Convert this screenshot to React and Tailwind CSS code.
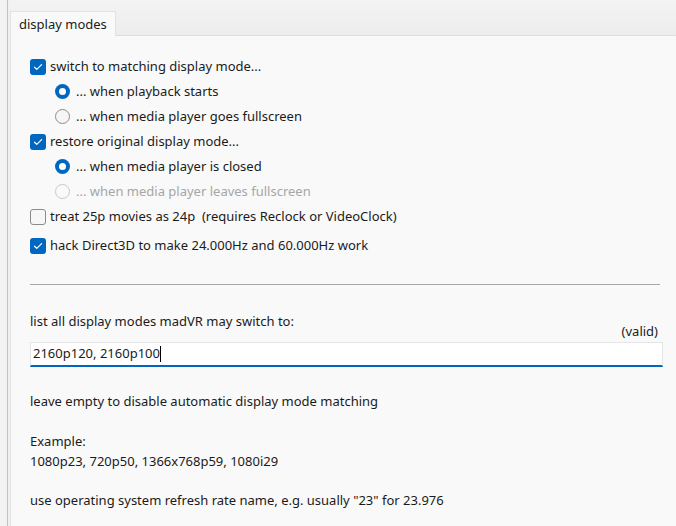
import React from 'react'

const font = { fontFamily: '"Noto Sans", "Open Sans", sans-serif' }

function Check({ checked }) {
  if (!checked) {
    return <span className="w-[16px] h-[16px] rounded-[3px] border border-[#8b8b8b] bg-[#f6f6f6] shrink-0" />
  }
  return (
    <span className="w-[16px] h-[16px] rounded-[3px] bg-[#0067c0] shrink-0 flex items-center justify-center">
      <svg width="10" height="8" viewBox="0 0 10 8" fill="none">
        <path d="M1.5 4.2 L3.8 6.4 L8.6 1.6" stroke="white" strokeWidth="1.2" strokeLinecap="round" strokeLinejoin="round" />
      </svg>
    </span>
  )
}

function Radio({ on, disabled }) {
  if (on) {
    return (
      <span className="w-[15px] h-[15px] rounded-full bg-[#0067c0] shrink-0 flex items-center justify-center">
        <span className="w-[7px] h-[7px] rounded-full bg-white" />
      </span>
    )
  }
  return (
    <span className={`w-[15px] h-[15px] rounded-full border shrink-0 ${disabled ? 'border-[#c8c8c8] bg-[#fafafa]' : 'border-[#8b8b8b] bg-[#f6f6f6]'}`} />
  )
}

function CheckRow({ checked, children, className = '' }) {
  return (
    <div className={`h-[25px] flex items-center gap-[4px] ${className}`}>
      <Check checked={checked} />
      <span>{children}</span>
    </div>
  )
}

function RadioRow({ on, disabled, children }) {
  return (
    <div className={`h-[25px] flex items-center gap-[6px] pl-[25px] ${disabled ? 'text-[#a6a6a6]' : ''}`}>
      <Radio on={on} disabled={disabled} />
      <span>{children}</span>
    </div>
  )
}

export default function App() {
  return (
    <div className="w-[676px] h-[526px] bg-[#f0f0f0] flex overflow-hidden text-[13px] text-[#1b1b1b]" style={font}>
      <div className="w-[8px] bg-[#f3f3f3] border-r border-[#c2c2c2] shrink-0" />
      <div className="flex-1 flex flex-col pl-[2px]">
        {/* tab strip */}
        <div className="h-[36px] flex items-end bg-gradient-to-b from-[#f3f3f3] to-[#ededed] border-b border-[#dedede] shrink-0">
          <div className="h-[25px] px-[8px] pt-[1px] bg-[#f9f9f9] border border-b-0 border-[#e2e2e2] -mb-px flex items-center">
            display modes
          </div>
        </div>

        {/* page */}
        <div className="flex-1 bg-[#f9f9f9] border-l border-[#e2e2e2] pl-[19px] pr-[13px] pt-[18px]">
          <CheckRow checked>switch to matching display mode...</CheckRow>
          <RadioRow on>... when playback starts</RadioRow>
          <RadioRow>... when media player goes fullscreen</RadioRow>
          <CheckRow checked>restore original display mode...</CheckRow>
          <RadioRow on>... when media player is closed</RadioRow>
          <RadioRow disabled>... when media player leaves fullscreen</RadioRow>
          <CheckRow>treat 25p movies as 24p&nbsp; (requires Reclock or VideoClock)</CheckRow>
          <CheckRow checked className="mt-[4px]">hack Direct3D to make 24.000Hz and 60.000Hz work</CheckRow>

          <div className="mt-[26px] h-px bg-[#a8a8a8] mr-[3px]" />

          <div className="mt-[27px] leading-[18px]">list all display modes madVR may switch to:</div>
          <div className="flex justify-end pr-[5px] leading-[18px] -mt-[8px]">(valid)</div>
          <div className="mt-[2px] h-[25px] bg-white border border-[#e5e5e5] border-b-2 border-b-[#0067c0] flex items-center pl-[2px]">
            <span>2160p120, 2160p100</span>
            <span className="w-px h-[16px] bg-black" />
          </div>

          <div className="mt-[24px] leading-[20px]">leave empty to disable automatic display mode matching</div>
          <div className="mt-[20px] leading-[20px]">Example:</div>
          <div className="leading-[20px]">1080p23, 720p50, 1366x768p59, 1080i29</div>
          <div className="mt-[19px] leading-[20px]">use operating system refresh rate name, e.g. usually "23" for 23.976</div>
        </div>
      </div>
    </div>
  )
}
